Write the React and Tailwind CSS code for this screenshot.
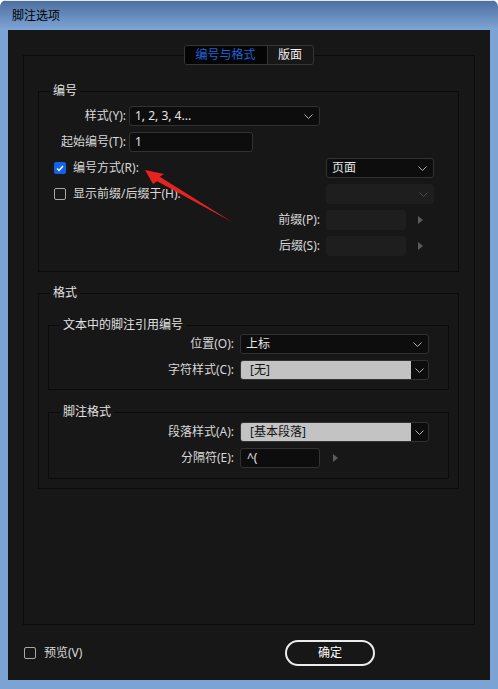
import React from "react";

function Chevron() {
  return (
    <svg width="9" height="5" viewBox="0 0 9 5" className="shrink-0">
      <path d="M0.5 0.5 L4.5 4.5 L8.5 0.5" fill="none" stroke="#b4b4b4" strokeWidth="1" />
    </svg>
  );
}

function Arrow() {
  return (
    <svg width="5" height="8" viewBox="0 0 5 8" className="shrink-0">
      <path d="M0 0 L5 4 L0 8 Z" fill="#5c5c5c" />
    </svg>
  );
}

function Select({ value, className, disabled }) {
  if (disabled) {
    return (
      <div className={`flex h-[20px] items-center justify-end rounded-[3px] bg-[#1e1e1e] pr-[6px] ${className}`}>
        <svg width="9" height="5" viewBox="0 0 9 5">
          <path d="M0.5 0.5 L4.5 4.5 L8.5 0.5" fill="none" stroke="#4a4a4a" strokeWidth="1" />
        </svg>
      </div>
    );
  }
  return (
    <div className={`flex h-[20px] items-center justify-between rounded-[3px] border border-[#323232] bg-[#0d0d0d] pl-[5px] pr-[6px] text-[#e6e6e6] ${className}`}>
      <span className="leading-[18px]">{value}</span>
      <Chevron />
    </div>
  );
}

function SplitSelect({ value }) {
  return (
    <div className="flex h-[20px] w-[189px] overflow-hidden rounded-[3px] border border-[#323232] bg-[#0d0d0d]">
      <div className="flex-1 bg-[#c3c3c3] pl-[9px] leading-[18px] text-[#141414]">{value}</div>
      <div className="flex w-[17px] items-center justify-center">
        <Chevron />
      </div>
    </div>
  );
}

function Input({ value, className, disabled }) {
  if (disabled) {
    return <div className={`h-[20px] rounded-[3px] bg-[#1e1e1e] ${className}`} />;
  }
  return (
    <div className={`h-[20px] rounded-[3px] border border-[#323232] bg-[#0d0d0d] pl-[5px] leading-[18px] text-[#e6e6e6] ${className}`}>
      {value}
    </div>
  );
}

function CheckBox({ checked }) {
  if (checked) {
    return (
      <div className="flex h-[12px] w-[12px] shrink-0 items-center justify-center rounded-[2px] bg-[#1662e6]">
        <svg width="8" height="7" viewBox="0 0 8 7">
          <path d="M1 3.5 L3 5.5 L7 1" fill="none" stroke="#ffffff" strokeWidth="1.5" />
        </svg>
      </div>
    );
  }
  return <div className="h-[12px] w-[12px] shrink-0 rounded-[2px] border border-[#a8a8a8]" />;
}

function Group({ label, className, children }) {
  return (
    <fieldset className={`border border-[#0b0b0b] ${className}`}>
      <legend className="ml-[11px] h-4 px-[3px] leading-4 text-[#e2e2e2]">{label}</legend>
      {children}
    </fieldset>
  );
}

export default function App() {
  return (
    <div className="relative flex h-[689px] w-[498px] flex-col overflow-hidden rounded-t-[7px] bg-[#7ba3d3] pb-[9px] font-['Noto_Sans','Noto_Sans_CJK_SC',sans-serif] text-[12px] text-[#d8d8d8]">
      {/* 标题栏 */}
      <div className="flex h-[30px] shrink-0 items-center border-t border-[#dfe8f3] bg-linear-to-b from-[#4e70a1] to-[#7ea6d6] pl-3 text-black">
        脚注选项
      </div>

      <div className="mx-2 flex flex-1 flex-col bg-[#171717] px-[15px] pt-[15px]">
        <fieldset className="h-[580px] border border-[#0b0b0b] pl-[14px] pr-[15px]">
          <legend className="mx-auto flex h-[20px] w-[130px] overflow-hidden rounded-[3px] border border-[#363636] leading-[18px]">
            <div className="w-[82px] bg-[#050505] text-center text-[#1d62dc]">编号与格式</div>
            <div className="flex-1 border-l border-[#363636] text-center text-[#f2f2f2]">版面</div>
          </legend>

          {/* 编号 */}
          <Group label="编号" className="mt-[18px]">
            <div className="flex flex-col gap-[6px] pt-[7px] pb-[15px]">
              <div className="flex items-center">
                <span className="w-[87px] text-right">样式(Y):</span>
                <Select className="ml-[3px] w-[191px]" value="1, 2, 3, 4..." />
              </div>
              <div className="flex items-center">
                <span className="w-[87px] text-right">起始编号(T):</span>
                <Input className="ml-[3px] w-[124px]" value="1" />
              </div>
              <div className="flex items-center">
                <div className="flex w-[287px] items-center gap-[7px] pl-[15px]">
                  <CheckBox checked />
                  <span>编号方式(R):</span>
                </div>
                <Select className="w-[108px]" value="页面" />
              </div>
              <div className="flex items-center">
                <div className="flex w-[287px] items-center gap-[7px] pl-[15px]">
                  <CheckBox />
                  <span>显示前缀/后缀于(H):</span>
                </div>
                <Select className="w-[108px]" disabled />
              </div>
              <div className="flex items-center">
                <span className="w-[281px] text-right">前缀(P):</span>
                <Input className="ml-[6px] w-[80px]" disabled />
                <div className="ml-[12px]">
                  <Arrow />
                </div>
              </div>
              <div className="flex items-center">
                <span className="w-[281px] text-right">后缀(S):</span>
                <Input className="ml-[6px] w-[80px]" disabled />
                <div className="ml-[12px]">
                  <Arrow />
                </div>
              </div>
            </div>
          </Group>

          {/* 格式 */}
          <Group label="格式" className="mt-[13px]">
            <div className="px-[9px] pt-4 pb-[9px]">
              <Group label="文本中的脚注引用编号">
                <div className="flex flex-col gap-[6px] pt-[1px] pb-[9px]">
                  <div className="flex items-center">
                    <span className="w-[185px] text-right">位置(O):</span>
                    <Select className="ml-[6px] w-[189px]" value="上标" />
                  </div>
                  <div className="flex items-center">
                    <span className="w-[185px] text-right">字符样式(C):</span>
                    <div className="ml-[6px]">
                      <SplitSelect value="[无]" />
                    </div>
                  </div>
                </div>
              </Group>

              <Group label="脚注格式" className="mt-[14px]">
                <div className="flex flex-col gap-[6px] pt-[2px] pb-[10px]">
                  <div className="flex items-center">
                    <span className="w-[185px] text-right">段落样式(A):</span>
                    <div className="ml-[6px]">
                      <SplitSelect value="[基本段落]" />
                    </div>
                  </div>
                  <div className="flex items-center">
                    <span className="w-[185px] text-right">分隔符(E):</span>
                    <Input className="ml-[6px] w-[80px] pl-[6px]" value="^(" />
                    <div className="ml-[13px]">
                      <Arrow />
                    </div>
                  </div>
                </div>
              </Group>
            </div>
          </Group>
        </fieldset>

        {/* 底部 */}
        <div className="mt-[15px] flex h-[26px] items-center">
          <div className="flex w-[262px] items-center gap-[8px] pl-[1px]">
            <CheckBox />
            <span>预览(V)</span>
          </div>
          <button className="h-[26px] w-[90px] rounded-full border-2 border-[#ececec] text-center leading-[22px] text-white">
            确定
          </button>
        </div>
      </div>

      {/* 红色箭头标注 */}
      <svg className="pointer-events-none absolute inset-0" width="498" height="689" viewBox="0 0 498 689">
        <polygon points="145,170 164,174 159.8,176.8 232,222 157.2,181.2 153,184" fill="#e8231f" />
      </svg>
    </div>
  );
}
